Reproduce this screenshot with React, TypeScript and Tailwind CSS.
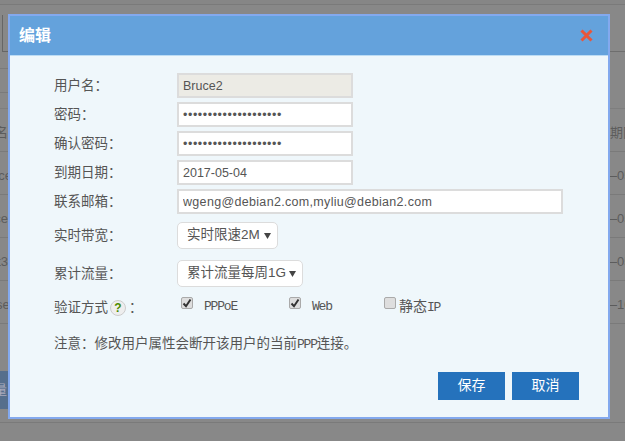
import React from 'react';

const FONT = "font-['Liberation_Sans','Noto_Sans_CJK_SC',sans-serif]";
const MONO = "font-['Liberation_Mono',monospace] text-[13px] tracking-[-1.2px]";

const bgRows = [
  { left: '户名', right: '期限', head: true },
  { left: 'Bruce', right: '—05' },
  { left: 'Alice', right: '—05' },
  { left: 'test3', right: '—05' },
  { left: 'muse', right: '—10' },
];

const Label = ({ children }: { children: React.ReactNode }) => <span className="pt-[2px]">{children}</span>;

const TextField = ({ value, type = 'text', disabled = false, wide = false }: { value: string; type?: string; disabled?: boolean; wide?: boolean }) => (
  <input
    type={type}
    value={value}
    readOnly
    className={`h-[25px] ${wide ? 'w-[386px] tracking-[0.32px]' : 'w-[176px]'} border-2 border-[#dcdcdc] px-[4px] text-[12.5px] text-[#555] outline-none ${
      disabled ? 'bg-[#ecebe5]' : 'bg-white'
    } ${type === 'password' ? 'tracking-[0.57px]' : ''}`}
  />
);

const Picker = ({ label, width }: { label: string; width: string }) => (
  <div className={`flex h-[27px] ${width} items-center justify-between rounded-[5px] border border-[#dcdcdc] bg-white pl-[9px] pr-[6px] text-[13.5px] text-[#555]`}>
    <span>{label}</span>
    <svg width="7" height="7" viewBox="0 0 7 7"><path d="M0 1h7L3.500 7z" fill="#444" /></svg>
  </div>
);

const Check = ({ checked, children, gap, width }: { checked: boolean; children: React.ReactNode; gap: string; width: string }) => (
  <div className={`flex ${width} items-center`}>
    <span className="-mt-[7px] flex h-[12px] w-[12px] items-center justify-center rounded-[2px] border border-[#aaa] bg-[#dedede]">
      {checked && (
        <svg width="10" height="10" viewBox="0 0 10 10"><path d="M1.500 5.500 4 8.200 8.500 1.500" fill="none" stroke="#333" strokeWidth="2" /></svg>
      )}
    </span>
    <span className={`${gap} text-[#555]`}>{children}</span>
  </div>
);

export default function App() {
  return (
    <div className={`relative h-[441px] w-[625px] overflow-hidden bg-[#888888] ${FONT}`}>
      {/* page behind the overlay */}
      <div className="h-[5px] border-b border-[#7a7a7a] bg-[#868686]" />
      <div className="flex h-[104px] justify-between border-b border-[#7e7e7e]">
        <div className="w-[8px] pt-[10px]">
          <div className="ml-[2px] h-[37px] border-b border-l border-[#666]" />
          <div className="mt-[16px] border-b border-[#7a7a7a]" />
          <div className="mt-[23px] border-b border-[#7a7a7a]" />
        </div>
        <div className="h-[47px] w-[15px] border-b border-[#6e6e6e]" />
      </div>
      {bgRows.map(row => (
        <div key={row.left} className="flex h-[43px] items-center justify-between overflow-hidden whitespace-nowrap border-b border-[#7a7a7a] pt-[5px] text-[13px] text-[#5c5c5c]">
          <span className="-ml-[22px] w-[30px] text-right">{row.left}</span>
          <span className={`w-[21px] overflow-hidden ${row.head ? 'pl-[6px]' : ''}`}>{row.right}</span>
        </div>
      ))}
      <div className="mt-[47px] flex h-[38px] w-[8px] items-center overflow-hidden bg-[#566f8c] text-[13px] text-[#aab]">
        <span className="-ml-[6px]">量</span>
      </div>
      <div className="mt-[13px] border-t border-[#7a7a7a]" />

      {/* edit dialog */}
      <div className="absolute left-[8px] top-[14px] flex h-[405px] w-[602px] flex-col border-2 border-[#83a9ee] bg-[#eff7fb]">
        <div className="flex h-[40px] shrink-0 items-center justify-between border-b border-[#bcdcf4] bg-[#64a2dc] pl-[9px] pr-[15px]">
          <span className="text-[16px] font-bold text-white">编辑</span>
          <svg width="13" height="13" viewBox="0 0 13 13"><path d="M1.500 1.500l10 10M11.500 1.500l-10 10" stroke="#e8563c" strokeWidth="3" /></svg>
        </div>

        <div className="flex flex-1 flex-col pl-[44px] pr-[29px] pt-[17px] text-[13.5px] text-[#555]">
          <div className="grid grid-cols-[123px_1fr] items-center gap-y-[4px]">
            <Label>用户名：</Label>
            <TextField value="Bruce2" disabled />
            <Label>密码：</Label>
            <TextField value="abcdefghijklmnopqrst" type="password" />
            <Label>确认密码：</Label>
            <TextField value="abcdefghijklmnopqrst" type="password" />
            <Label>到期日期：</Label>
            <TextField value="2017-05-04" />
            <Label>联系邮箱：</Label>
            <TextField value="wgeng@debian2.com,myliu@debian2.com" wide />
          </div>

          <div className="mt-[8px] grid grid-cols-[123px_1fr] items-center gap-y-[11px]">
            <Label>实时带宽：</Label>
            <Picker label="实时限速2M" width="w-[101px]" />
            <Label>累计流量：</Label>
            <Picker label="累计流量每周1G" width="w-[126px]" />
          </div>

          <div className="mt-[7px] grid grid-cols-[123px_1fr] items-start">
            <span className="flex items-center pt-[4px]">
              验证方式
              <span className="ml-[2px] flex h-[16px] w-[16px] items-center justify-center rounded-full border border-[#ccc] bg-[#eee] text-[12px] font-bold text-[#4a8a00]">?</span>
              <span className="ml-[3px]">：</span>
            </span>
            <div className="flex pl-[4px] pt-[2px]">
              <Check checked gap={`ml-[11px] ${MONO}`} width="w-[108px]">PPPoE</Check>
              <Check checked gap={`ml-[11px] ${MONO}`} width="w-[95px]">Web</Check>
              <Check checked={false} gap="ml-[3px] text-[14px]" width="w-[80px]">
                静态<span className={MONO}>IP</span>
              </Check>
            </div>
          </div>

          <p className="mt-[16px]">
            注意：修改用户属性会断开该用户的当前<span className={MONO}>PPP</span>连接。
          </p>

          <div className="mt-[17px] flex justify-end gap-[7px]">
            <button className="h-[28px] w-[67px] bg-[#2572bc] text-[14px] text-white">保存</button>
            <button className="h-[28px] w-[67px] bg-[#2572bc] text-[14px] text-white">取消</button>
          </div>
        </div>
      </div>
    </div>
  );
}
